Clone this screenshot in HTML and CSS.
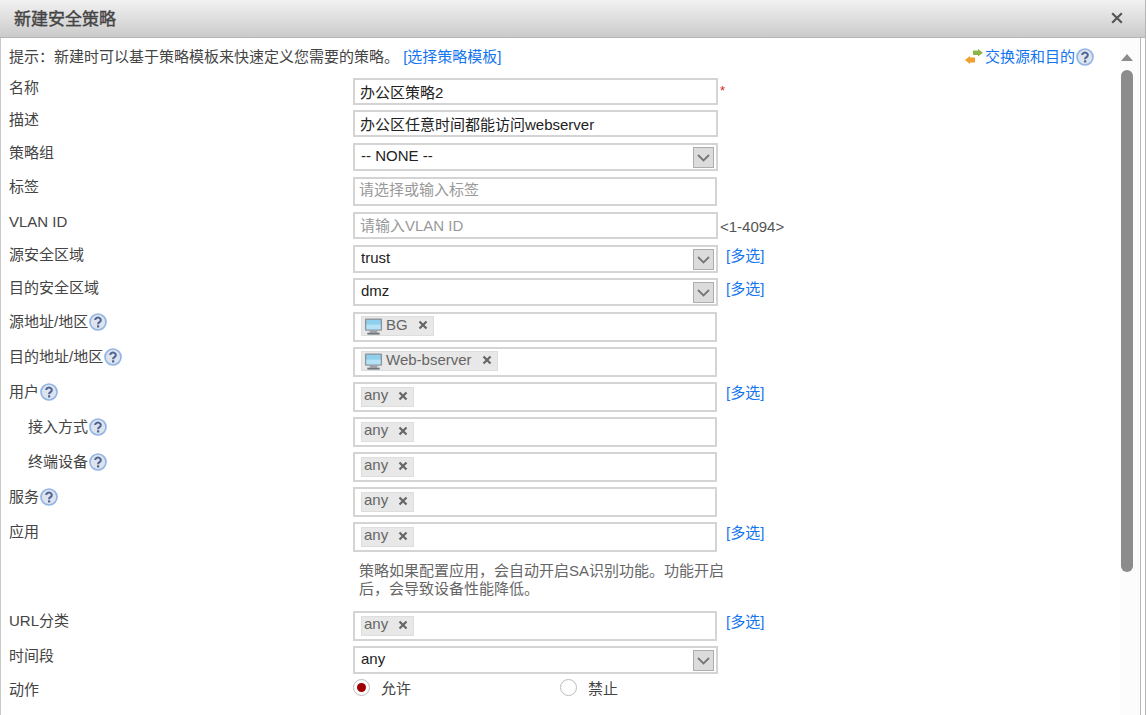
FILE: index.html
```html
<!DOCTYPE html>
<html lang="zh-CN">
<head>
<meta charset="utf-8">
<title>新建安全策略</title>
<link rel="stylesheet" href="styles.css">
</head>
<body>
<svg class="defs" width="0" height="0" aria-hidden="true">
  <symbol id="help" viewBox="0 0 18 18">
    <circle cx="9" cy="9" r="8" fill="#dde4ee" stroke="#92b5e6" stroke-width="1.7"/>
    <path d="M6.200 7a2.800 2.500 0 1 1 4.400 2.100c-1 .7-1.500 1-1.500 2.100" fill="none" stroke="#4f6490" stroke-width="2.100"/>
    <rect x="8" y="12.300" width="2.200" height="2.200" fill="#4f6490"/>
  </symbol>
  <symbol id="monitor" viewBox="0 0 20 20">
    <rect x="1" y="1.500" width="18" height="13" rx="1" fill="#8f959c"/>
    <rect x="2.500" y="3" width="15" height="10" fill="#8fd0ee"/>
    <rect x="2.500" y="8" width="15" height="5" fill="#b6e2f5"/>
    <rect x="6" y="14.500" width="8" height="2" fill="#9a9fa5"/>
    <rect x="3.500" y="16.500" width="13" height="2" fill="#6f747a"/>
  </symbol>
  <symbol id="remove" viewBox="0 0 10 10">
    <path d="M1.500 1.500l7 7M8.500 1.500l-7 7" stroke="#666" stroke-width="2.200" fill="none"/>
  </symbol>
  <symbol id="chevron" viewBox="0 0 21 21">
    <rect x=".5" y=".5" width="20" height="20" fill="#dcdcdc" stroke="#adadad"/>
    <path d="M5 8l5.500 5.500L16 8" fill="none" stroke="#777" stroke-width="1.800"/>
  </symbol>
</svg>
<div class="dialog">
  <header class="titlebar">
    <h1 class="title">新建安全策略</h1>
    <svg class="close" viewBox="0 0 10 10" aria-label="关闭"><path d="M1 1l8 8M9 1l-8 8" stroke="#555" stroke-width="1.800" fill="none"/></svg>
  </header>
  <div class="panel">
    <main class="content">
      <div class="hint">
        <p class="hint-text">提示：新建时可以基于策略模板来快速定义您需要的策略。 <a class="link" href="#">[选择策略模板]</a></p>
        <a class="link swap" href="#">
          <svg class="swap-icon" viewBox="0 0 18 16">
            <path d="M8 1.500h5V0l5 3.800-5 3.700V6H8z" fill="#8db54a"/>
            <path d="M10 8.500H5V7L0 11l5 4v-1.500h5z" fill="#f0a030"/>
          </svg>交换源和目的<svg class="help"><use href="#help"/></svg>
        </a>
      </div>
      <form class="form">
        <div class="row">
          <label class="label">名称</label>
          <input class="input" type="text" value="办公区策略2">
          <span class="required">*</span>
        </div>
        <div class="row">
          <label class="label">描述</label>
          <input class="input" type="text" value="办公区任意时间都能访问webserver">
        </div>
        <div class="row">
          <label class="label">策略组</label>
          <div class="select">-- NONE --<svg class="chevron"><use href="#chevron"/></svg></div>
        </div>
        <div class="row">
          <label class="label">标签</label>
          <input class="input input-tag" type="text" placeholder="请选择或输入标签">
        </div>
        <div class="row">
          <label class="label">VLAN ID</label>
          <input class="input" type="text" placeholder="请输入VLAN ID">
          <span class="range">&lt;1-4094&gt;</span>
        </div>
        <div class="row">
          <label class="label">源安全区域</label>
          <div class="select">trust<svg class="chevron"><use href="#chevron"/></svg></div>
          <a class="link multi" href="#">[多选]</a>
        </div>
        <div class="row">
          <label class="label">目的安全区域</label>
          <div class="select">dmz<svg class="chevron"><use href="#chevron"/></svg></div>
          <a class="link multi" href="#">[多选]</a>
        </div>
        <div class="row">
          <label class="label">源地址/地区<svg class="help"><use href="#help"/></svg></label>
          <div class="tags"><span class="tag"><svg class="monitor"><use href="#monitor"/></svg>BG<svg class="remove"><use href="#remove"/></svg></span></div>
        </div>
        <div class="row">
          <label class="label">目的地址/地区<svg class="help"><use href="#help"/></svg></label>
          <div class="tags"><span class="tag"><svg class="monitor"><use href="#monitor"/></svg>Web-bserver<svg class="remove"><use href="#remove"/></svg></span></div>
        </div>
        <div class="row">
          <label class="label">用户<svg class="help"><use href="#help"/></svg></label>
          <div class="tags"><span class="tag">any<svg class="remove"><use href="#remove"/></svg></span></div>
          <a class="link multi" href="#">[多选]</a>
        </div>
        <div class="row">
          <label class="label label-sub">接入方式<svg class="help"><use href="#help"/></svg></label>
          <div class="tags"><span class="tag">any<svg class="remove"><use href="#remove"/></svg></span></div>
        </div>
        <div class="row">
          <label class="label label-sub">终端设备<svg class="help"><use href="#help"/></svg></label>
          <div class="tags"><span class="tag">any<svg class="remove"><use href="#remove"/></svg></span></div>
        </div>
        <div class="row">
          <label class="label">服务<svg class="help"><use href="#help"/></svg></label>
          <div class="tags"><span class="tag">any<svg class="remove"><use href="#remove"/></svg></span></div>
        </div>
        <div class="row">
          <label class="label">应用</label>
          <div class="tags"><span class="tag">any<svg class="remove"><use href="#remove"/></svg></span></div>
          <a class="link multi" href="#">[多选]</a>
        </div>
        <div class="row">
          <span></span>
          <p class="note">策略如果配置应用，会自动开启SA识别功能。功能开启后，会导致设备性能降低。</p>
        </div>
        <div class="row">
          <label class="label">URL分类</label>
          <div class="tags"><span class="tag">any<svg class="remove"><use href="#remove"/></svg></span></div>
          <a class="link multi" href="#">[多选]</a>
        </div>
        <div class="row">
          <label class="label">时间段</label>
          <div class="select">any<svg class="chevron"><use href="#chevron"/></svg></div>
        </div>
        <div class="row">
          <label class="label label-action">动作</label>
          <div class="radios">
            <span class="radio-item"><span class="radio radio-on"></span>允许</span>
            <span class="radio-item"><span class="radio"></span>禁止</span>
          </div>
        </div>
      </form>
    </main>
    <aside class="scrollbar">
      <span class="scroll-arrow"></span>
      <span class="scroll-thumb"></span>
    </aside>
  </div>
</div>
</body>
</html>
```
FILE: styles.css
```css
* { box-sizing: border-box; }
html, body { margin: 0; height: 100%; overflow: hidden; }
body {
  font-family: "Liberation Sans", "Noto Sans CJK SC", sans-serif;
  font-size: 15px;
  color: #444;
  background: #fff;
}
.defs { position: absolute; }
.dialog {
  width: 1146px;
  height: 715px;
  display: flex;
  flex-direction: column;
  border-right: 1px solid #b5b5b5;
  background: #fff;
}
.titlebar {
  height: 38px;
  flex: none;
  display: flex;
  align-items: center;
  justify-content: space-between;
  padding: 0 22px 2px 14px;
  background: linear-gradient(#f2f2f2, #cacaca);
  border-bottom: 1px solid #b4b4b4;
}
.title {
  margin: 0;
  font-size: 17px;
  font-weight: normal;
  color: #444;
  -webkit-text-stroke: .4px #444;
}
.close { width: 12px; height: 12px; }
.panel {
  flex: 1;
  min-height: 0;
  display: flex;
  border-left: 1px solid #c8c8c8;
}
.content {
  width: 1119px;
  flex: none;
  padding: 9px 0 0 8px;
  overflow: hidden;
}
.hint {
  display: flex;
  justify-content: space-between;
  height: 31px;
  line-height: 20px;
  padding-right: 26px;
}
.hint-text { margin: 0; }
.link { color: #1475ee; text-decoration: none; }
.swap { display: flex; align-items: center; height: 20px; }
.swap-icon { width: 18px; height: 16px; margin-right: 2px; }
.help {
  width: 18px;
  height: 18px;
  vertical-align: -4px;
  margin-left: 1px;
}
.form {
  display: grid;
  grid-template-rows: 32px 33px 34px 35px 33px 33px 34px 35px 35px 35px 35px 35px 35px 35px 54px 35px 33px 30px;
}
.row {
  display: grid;
  grid-template-columns: 344px 365px 1fr;
  align-items: start;
}
.label { line-height: 20px; }
.label-sub { padding-left: 19px; }
.label-action { margin-top: 1px; }
.input {
  width: 365px;
  height: 27px;
  border: 2px solid #d4d4d4;
  padding: 0 5px;
  margin: 0;
  font: inherit;
  color: #222;
  outline: none;
  background: #fff;
}
.input-tag { height: 29px; width: 364px; padding: 0 4px 4px; }
.input::placeholder { color: #999; opacity: 1; }
.required {
  color: #d22;
  font-size: 13px;
  margin: 5px 0 0 2px;
}
.range {
  font-size: 15px;
  color: #555;
  line-height: 29px;
  padding-left: 2px;
  white-space: nowrap;
}
.select {
  width: 365px;
  height: 28px;
  border: 2px solid #d4d4d4;
  padding: 0 2px 4px 6px;
  display: flex;
  align-items: center;
  justify-content: space-between;
  color: #222;
  background: #fff;
}
.chevron { width: 21px; height: 21px; margin-bottom: -4px; }
.multi { margin: 1px 0 0 8px; line-height: 20px; }
.tags {
  width: 364px;
  height: 30px;
  border: 2px solid #d4d4d4;
  padding: 2px 0 0 6px;
  background: #fff;
}
.tag {
  display: inline-flex;
  align-items: center;
  height: 20px;
  padding: 0 5px 4px 2px;
  background: #e8e8e8;
  border: 1px solid #ddd;
  color: #666;
  font-size: 15px;
}
.monitor { width: 19px; height: 19px; margin: 0 3px -4px 0; }
.remove { width: 10px; height: 10px; margin: 2px 0 0 10px; }
.note {
  margin: 5px 0 0;
  padding-left: 6px;
  width: 374px;
  color: #666;
  line-height: 18px;
}
.radios { display: flex; height: 20px; align-items: center; margin-top: -2px; }
.radio-item {
  width: 207px;
  display: flex;
  align-items: center;
  gap: 11px;
  flex: none;
}
.radio {
  width: 17px;
  height: 17px;
  margin-left: 0;
  border: 1px solid #bbb;
  border-radius: 50%;
  background: #fff;
  display: flex;
  align-items: center;
  justify-content: center;
}
.radio-on::after {
  content: "";
  width: 9px;
  height: 9px;
  border-radius: 50%;
  background: #a00000;
}
.scrollbar {
  width: 21px;
  flex: none;
  background: #fcfcfc;
  border-right: 1px solid #b8b8b8;
  margin-right: 3px;
  display: flex;
  flex-direction: column;
  align-items: center;
  padding: 16px 6px 0 0;
}
.scroll-arrow {
  width: 0;
  height: 0;
  border-left: 6px solid transparent;
  border-right: 6px solid transparent;
  border-bottom: 7px solid #8c8c8c;
}
.scroll-thumb {
  width: 12px;
  height: 502px;
  margin-top: 9px;
  background: #8c8c8c;
  border-radius: 6px;
}
```
